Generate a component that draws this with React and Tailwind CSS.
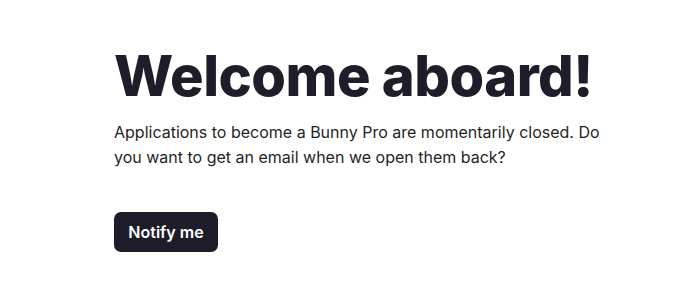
export default function App() {
  return (
    <div className="min-h-[290px] w-[700px] bg-white font-['Inter',sans-serif]">
      <div className="pl-[114px] pt-[42px]">
        <h1 className="text-[56px] leading-[68px] font-extrabold tracking-[-0.5px] text-[#1d1e2a]">
          Welcome aboard!
        </h1>
        <p className="mt-[10px] w-[495px] text-[16px] leading-[25px] text-[#1f1f24]">
          Applications to become a Bunny Pro are momentarily closed. Do you want to get an email when we open them back?
        </p>
        <button className="mt-[42px] h-[40px] w-[104px] rounded-[7px] bg-[#1c1d29] text-[16px] font-semibold text-white">
          Notify me
        </button>
      </div>
    </div>
  );
}
